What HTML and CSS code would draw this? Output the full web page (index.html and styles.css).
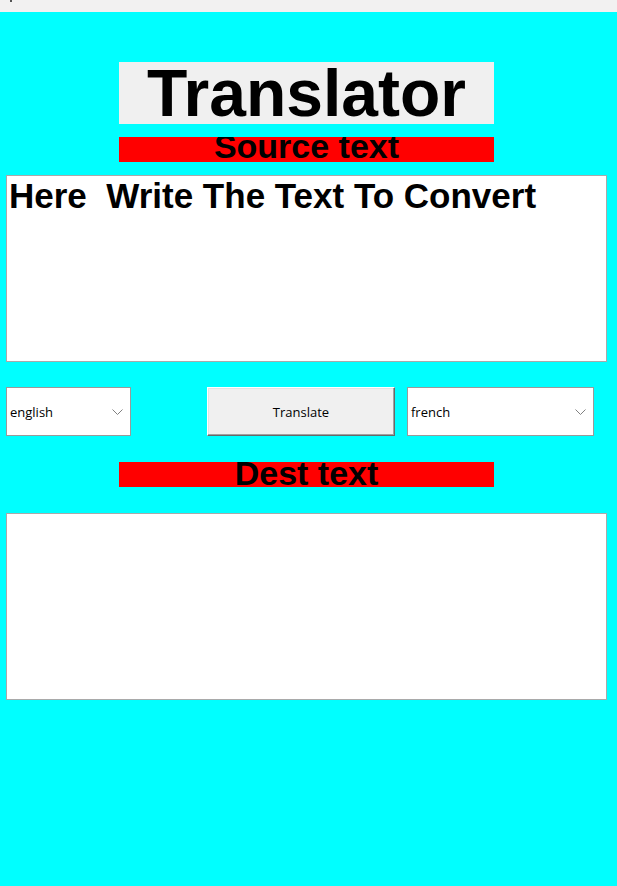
FILE: index.html
```html
<!DOCTYPE html>
<html lang="en">
<head>
<meta charset="utf-8">
<title>Translator</title>
<link rel="stylesheet" href="styles.css">
</head>
<body>
<div class="topbar"><span class="topbar-mark"></span></div>
<main class="app">
  <h1 class="title">Translator</h1>
  <div class="label">Source text</div>
  <textarea class="textbox source">Here  Write The Text To Convert</textarea>
  <div class="controls">
    <div class="combo combo-src">
      <span class="combo-text">english</span>
      <svg class="chev" width="11" height="6" viewBox="0 0 11 6"><path d="M0.5 0.5 L5.5 5.5 L10.5 0.5" fill="none" stroke="#808080" stroke-width="1"/></svg>
    </div>
    <button class="btn" type="button">Translate</button>
    <div class="combo combo-dst">
      <span class="combo-text">french</span>
      <svg class="chev" width="11" height="6" viewBox="0 0 11 6"><path d="M0.5 0.5 L5.5 5.5 L10.5 0.5" fill="none" stroke="#808080" stroke-width="1"/></svg>
    </div>
  </div>
  <div class="label label-dest">Dest text</div>
  <textarea class="textbox dest"></textarea>
</main>
</body>
</html>
```

FILE: styles.css
```css
html, body {
  margin: 0;
  padding: 0;
}
body {
  background: #00ffff;
  width: 617px;
  height: 886px;
  overflow: hidden;
  font-family: "Liberation Sans", Arial, sans-serif;
}
.topbar {
  height: 12px;
  background: #f2f1f1;
  position: relative;
}
.topbar-mark {
  position: absolute;
  left: 10px;
  top: 0;
  width: 2px;
  height: 2px;
  background: #555;
}
.app {
  display: flex;
  flex-direction: column;
  align-items: flex-start;
}
.title {
  margin: 50px 0 0 119px;
  width: 375px;
  height: 62px;
  background: #f0f0f0;
  font-family: "Liberation Sans", Arial, sans-serif;
  font-weight: bold;
  font-size: 66px;
  line-height: 62px;
  text-align: center;
  color: #000;
}
.label {
  margin: 13px 0 0 119px;
  width: 375px;
  height: 25px;
  background: #ff0000;
  font-weight: bold;
  font-size: 34px;
  line-height: 18px;
  text-align: center;
  color: #000;
  overflow: hidden;
  box-sizing: border-box;
}
.label-dest {
  margin-top: 26px;
  line-height: 22px;
}
.textbox {
  display: block;
  box-sizing: border-box;
  margin: 13px 0 0 6px;
  width: 601px;
  height: 187px;
  border: 1px solid #a9a9a9;
  background: #fff;
  padding: 0 2px;
  resize: none;
  outline: none;
  font-family: "Liberation Sans", Arial, sans-serif;
  font-weight: bold;
  font-size: 35px;
  line-height: 40px;
  color: #000;
  overflow: hidden;
}
.textbox.dest {
  margin-top: 26px;
  height: 187px;
}
.controls {
  display: flex;
  align-items: stretch;
  margin: 25px 0 0 6px;
  height: 49px;
}
.combo {
  box-sizing: border-box;
  height: 49px;
  border: 1px solid #9a9a9a;
  background: #fff;
  display: flex;
  align-items: center;
  justify-content: space-between;
  padding: 0 7px 0 3px;
  font-family: "Open Sans", "Noto Sans", sans-serif;
  font-size: 13px;
  color: #000;
}
.combo-src {
  width: 125px;
}
.combo-dst {
  width: 187px;
  margin-left: 12px;
}
.chev {
  display: block;
}
.btn {
  box-sizing: border-box;
  margin: 0 0 0 76px;
  width: 188px;
  height: 49px;
  background: #f0f0f0;
  border: 1px solid;
  border-color: #ffffff #696969 #696969 #ffffff;
  box-shadow: inset -1px -1px 0 #a0a0a0, inset 1px 1px 0 #e3e3e3;
  font-family: "Open Sans", "Noto Sans", sans-serif;
  font-size: 13px;
  color: #000;
  padding: 0;
}
```
